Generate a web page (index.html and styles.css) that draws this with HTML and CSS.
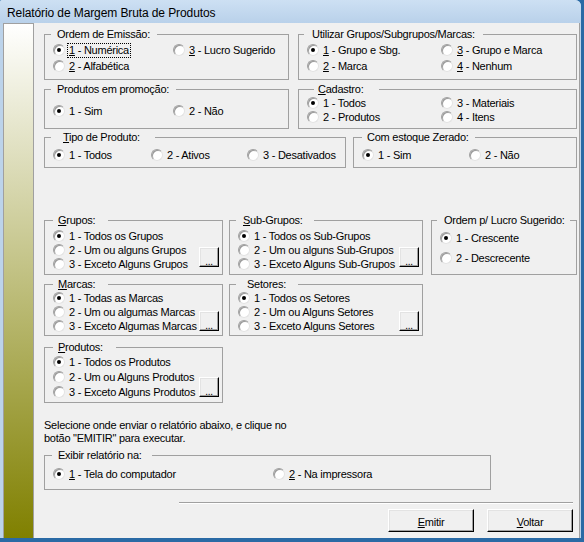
FILE: index.html
```html
<!DOCTYPE html>
<html>
<head>
<meta charset="utf-8">
<link rel="stylesheet" href="styles.css">
</head>
<body>
<div class="window">
  <div class="titlebar"><span class="title">Relatório de Margem Bruta de Produtos</span></div>
  <div class="client">
    <div class="sidebar"></div>
    <div class="main">
      <div class="row r1">
        <fieldset class="gb w-ordem">
          <legend class="lg">Ordem de Emissão:</legend>
          <div class="body g-ordem">
            <label class="rb"><i class="on"></i><span class="focus"><u>1</u> - Numérica</span></label>
            <label class="rb"><i></i><span><u>3</u> - Lucro Sugerido</span></label>
            <label class="rb"><i></i><span><u>2</u> - Alfabética</span></label>
          </div>
        </fieldset>
        <fieldset class="gb w-util">
          <legend class="lg lg-util">Utilizar Grupos/Subgrupos/Marcas:</legend>
          <div class="body g-util">
            <label class="rb"><i class="on"></i><span><u>1</u> - Grupo e Sbg.</span></label>
            <label class="rb"><i></i><span><u>3</u> - Grupo e Marca</span></label>
            <label class="rb"><i></i><span><u>2</u> - Marca</span></label>
            <label class="rb"><i></i><span><u>4</u> - Nenhum</span></label>
          </div>
        </fieldset>
      </div>

      <div class="row r2">
        <fieldset class="gb w-ordem">
          <legend class="lg">Produtos em promoção:</legend>
          <div class="body g-promo">
            <label class="rb"><i class="on"></i><span>1 - Sim</span></label>
            <label class="rb"><i></i><span>2 - Não</span></label>
          </div>
        </fieldset>
        <fieldset class="gb w-util">
          <legend class="lg lg-cad"><u>C</u>adastro:</legend>
          <div class="body g-cad">
            <label class="rb"><i class="on"></i><span>1 - Todos</span></label>
            <label class="rb"><i></i><span>3 - Materiais</span></label>
            <label class="rb"><i></i><span>2 - Produtos</span></label>
            <label class="rb"><i></i><span>4 - Itens</span></label>
          </div>
        </fieldset>
      </div>

      <div class="row r3">
        <fieldset class="gb w-tipo">
          <legend class="lg lg-tipo"><u>T</u>ipo de Produto:</legend>
          <div class="body g-tipo">
            <label class="rb"><i class="on"></i><span>1 - Todos</span></label>
            <label class="rb"><i></i><span>2 - Ativos</span></label>
            <label class="rb"><i></i><span>3 - Desativados</span></label>
          </div>
        </fieldset>
        <fieldset class="gb w-est">
          <legend class="lg lg-est">Com estoque Zerado:</legend>
          <div class="body g-est">
            <label class="rb"><i class="on"></i><span>1 - Sim</span></label>
            <label class="rb"><i></i><span>2 - Não</span></label>
          </div>
        </fieldset>
      </div>

      <div class="row r4">
        <div class="col c1">
          <fieldset class="gb">
            <legend class="lg lg-grp"><u>G</u>rupos:</legend>
            <div class="body sel sel-a">
              <div class="list l14">
                <label class="rb"><i class="on"></i><span>1 - Todos os Grupos</span></label>
                <label class="rb"><i></i><span>2 - Um ou alguns Grupos</span></label>
                <label class="rb"><i></i><span>3 - Exceto Alguns Grupos</span></label>
              </div>
              <button class="btn dots b-a">...</button>
            </div>
          </fieldset>
          <fieldset class="gb m-marcas">
            <legend class="lg lg-grp"><u>M</u>arcas:</legend>
            <div class="body sel sel-b">
              <div class="list l14">
                <label class="rb"><i class="on"></i><span>1 - Todas as Marcas</span></label>
                <label class="rb"><i></i><span>2 - Um ou algumas Marcas</span></label>
                <label class="rb"><i></i><span>3 - Exceto Algumas Marcas</span></label>
              </div>
              <button class="btn dots b-b">...</button>
            </div>
          </fieldset>
          <fieldset class="gb m-prod">
            <legend class="lg lg-grp"><u>P</u>rodutos:</legend>
            <div class="body sel sel-c">
              <div class="list l15">
                <label class="rb"><i class="on"></i><span>1 - Todos os Produtos</span></label>
                <label class="rb"><i></i><span>2 - Um ou Alguns Produtos</span></label>
                <label class="rb"><i></i><span>3 - Exceto Alguns Produtos</span></label>
              </div>
              <button class="btn dots b-b">...</button>
            </div>
          </fieldset>
        </div>
        <div class="col c2">
          <fieldset class="gb">
            <legend class="lg lg-sub"><u>S</u>ub-Grupos:</legend>
            <div class="body sel sel-a">
              <div class="list l14">
                <label class="rb"><i class="on"></i><span>1 - Todos os Sub-Grupos</span></label>
                <label class="rb"><i></i><span>2 - Um ou alguns Sub-Grupos</span></label>
                <label class="rb"><i></i><span>3 - Exceto Alguns Sub-Grupos</span></label>
              </div>
              <button class="btn dots b-a">...</button>
            </div>
          </fieldset>
          <fieldset class="gb m-marcas">
            <legend class="lg lg-set">Setores:</legend>
            <div class="body sel sel-b">
              <div class="list l14">
                <label class="rb"><i class="on"></i><span>1 - Todos os Setores</span></label>
                <label class="rb"><i></i><span>2 - Um ou Alguns Setores</span></label>
                <label class="rb"><i></i><span>3 - Exceto Alguns Setores</span></label>
              </div>
              <button class="btn dots b-b">...</button>
            </div>
          </fieldset>
        </div>
        <div class="col c3">
          <fieldset class="gb">
            <legend class="lg lg-luc">Ordem p/ Lucro Sugerido:</legend>
            <div class="body g-luc">
              <label class="rb"><i class="on"></i><span>1 - Crescente</span></label>
              <label class="rb"><i></i><span>2 - Descrecente</span></label>
            </div>
          </fieldset>
        </div>
      </div>

      <p class="hint">Selecione onde enviar o relatório abaixo, e clique no<br>botão "EMITIR" para executar.</p>

      <fieldset class="gb w-exi">
        <legend class="lg lg-exi">Exibir relatório na:</legend>
        <div class="body g-exi">
          <label class="rb"><i class="on"></i><span><u>1</u> - Tela do computador</span></label>
          <label class="rb"><i></i><span><u>2</u> - Na impressora</span></label>
        </div>
      </fieldset>

      <div class="sep"></div>
      <div class="actions">
        <button class="btn big"><u>E</u>mitir</button>
        <button class="btn big"><u>V</u>oltar</button>
      </div>
    </div>
  </div>
</div>
</body>
</html>
```

FILE: styles.css
```css
html, body {
  margin: 0;
  padding: 0;
}
body {
  width: 584px;
  height: 542px;
  overflow: hidden;
  background: #2a6aa5;
  font-family: "Liberation Sans", Arial, sans-serif;
  font-size: 11px;
  letter-spacing: -0.25px;
  color: #000;
}
.window {
  width: 581px;
  height: 538px;
  display: flex;
  flex-direction: column;
  background: #bcd3ea;
  border-top-right-radius: 6px;
  border-top-left-radius: 2px;
  overflow: hidden;
}
.titlebar {
  height: 23px;
  flex: none;
  background: linear-gradient(#cde0f3, #b9d1ea);
  display: flex;
  align-items: center;
}
.title {
  margin-left: 7px;
  font-size: 12px;
  letter-spacing: -0.1px;
  padding-top: 3px;
}
.client {
  flex: 1;
  display: flex;
  margin-left: 3px;
  margin-right: 1px;
  background: #f0f0f0;
  border-right: 1px solid #a0a0a0;
}
.sidebar {
  width: 29px;
  flex: none;
  border: 1px solid #a0a0a0;
  border-bottom: none;
  background: linear-gradient(#ffffff, #808000);
}
.main {
  flex: 1;
  display: flex;
  flex-direction: column;
  align-items: flex-start;
  padding-left: 10px;
}
.row {
  display: flex;
  align-items: flex-start;
}
.r1 { margin-top: 5px; gap: 9px; }
.r2 { margin-top: 3px; gap: 9px; }
.r3 { margin-top: 2px; gap: 7px; }
.r4 { margin-top: 46px; gap: 6px; }

.gb {
  margin: 0;
  padding: 0;
  border: 1px solid #a0a0a0;
  min-width: 0;
  box-sizing: border-box;
}
.lg {
  margin-left: 6px;
  padding: 0 7px 0 6px;
  line-height: 13px;
  height: 13px;
  white-space: nowrap;
}
.lg-util { margin-left: 5px; padding: 0 8px 0 8px; }
.lg-cad { margin-left: 15px; padding: 0 16px 0 4px; }
.lg-tipo { padding: 0 15px 0 12px; }
.lg-est { margin-left: 8px; padding: 0 6px 0 5px; }
.lg-grp { margin-left: 8px; padding: 0 13px 0 5px; }
.lg-sub { margin-left: 6px; padding: 0 11px 0 7px; }
.lg-set { margin-left: 6px; padding: 0 12px 0 11px; }
.lg-luc { margin-left: 5px; padding: 0 5px 0 7px; }
.lg-exi { margin-left: 7px; padding: 0 10px 0 6px; }

.body {
  padding-left: 8px;
}

.w-ordem { width: 245px; }
.w-util { width: 279px; }
.w-tipo { width: 302px; }
.w-est { width: 224px; }
.w-exi { width: 447px; margin-top: 4px; }

.g-ordem {
  display: grid;
  grid-template-columns: 120px 1fr;
  grid-auto-rows: 16px;
  padding-top: 1px;
  padding-bottom: 5px;
}
.g-util {
  display: grid;
  grid-template-columns: 134px 1fr;
  grid-auto-rows: 16px;
  padding-top: 1px;
  padding-bottom: 5px;
}
.g-promo {
  display: grid;
  grid-template-columns: 120px 1fr;
  grid-auto-rows: 16px;
  padding-top: 7px;
  padding-bottom: 9px;
}
.g-cad {
  display: grid;
  grid-template-columns: 134px 1fr;
  grid-auto-rows: 14px;
  padding-top: 0;
  padding-bottom: 4px;
}
.g-tipo {
  display: grid;
  grid-template-columns: 98px 96px 1fr;
  grid-auto-rows: 16px;
  padding-top: 3px;
  padding-bottom: 4px;
}
.g-est {
  display: grid;
  grid-template-columns: 107px 1fr;
  grid-auto-rows: 16px;
  padding-top: 3px;
  padding-bottom: 4px;
}
.g-exi {
  display: grid;
  grid-template-columns: 220px 1fr;
  grid-auto-rows: 16px;
  padding-top: 4px;
  padding-bottom: 7px;
}
.g-luc {
  display: grid;
  grid-auto-rows: 20px;
  padding-top: 1px;
  padding-bottom: 6px;
}

.col {
  display: flex;
  flex-direction: column;
}
.c1 { width: 179px; }
.c2 { width: 194px; margin-right: 2px; }
.c3 { width: 146px; }
.col .gb { width: 100%; }
.m-marcas { margin-top: 3px; }
.m-prod { margin-top: 5px; }

.sel {
  display: flex;
  align-items: flex-end;
  padding-right: 3px;
}
.sel-a { padding-top: 2px; padding-bottom: 3px; }
.sel-b { padding-top: 0; padding-bottom: 2px; }
.sel-c { padding-top: 0; padding-bottom: 3px; }
.list {
  flex: 1;
  min-width: 0;
  display: grid;
}
.l14 { grid-auto-rows: 14px; }
.l15 { grid-auto-rows: 15px; }

.rb {
  display: flex;
  align-items: center;
  white-space: nowrap;
}
.rb i {
  position: relative;
  flex: none;
  width: 12px;
  height: 12px;
  box-sizing: border-box;
  border-radius: 50%;
  background: #fff;
  border: 1px solid;
  border-color: #a0a0a0 #e3e3e3 #e3e3e3 #a0a0a0;
  box-shadow: inset 1px 1px 0 #9a9a9a;
  margin-right: 4px;
}
.rb i.on::after {
  content: "";
  position: absolute;
  left: 3px;
  top: 3px;
  width: 4px;
  height: 4px;
  border-radius: 50%;
  background: #000;
}
.focus {
  outline: 1px dotted #000;
  padding: 0 1px;
  line-height: 13px;
  margin-left: -1px;
}
u {
  text-decoration: underline;
  text-underline-offset: 1px;
}

.btn {
  box-sizing: border-box;
  margin: 0;
  padding: 0;
  background: #f0f0f0;
  border: 1px solid;
  border-color: #fff #000 #000 #fff;
  box-shadow: inset -1px -1px 0 #a0a0a0, inset 1px 1px 0 #e3e3e3;
  font-family: "Liberation Sans", Arial, sans-serif;
  font-size: 11px;
  letter-spacing: -0.25px;
  color: #000;
}
.dots {
  flex: none;
  width: 20px;
  height: 20px;
  line-height: 20px;
  padding-top: 4px;
  font-size: 10px;
}
.b-a { margin-bottom: 4px; }
.b-b { margin-bottom: 2px; }

.hint {
  margin: 16px 0 0 0;
  line-height: 13px;
  white-space: nowrap;
}

.sep {
  align-self: flex-end;
  width: 394px;
  margin-right: 6px;
  margin-top: 12px;
  border-top: 1px solid #a0a0a0;
  border-bottom: 1px solid #fff;
}
.actions {
  align-self: flex-end;
  margin-right: 6px;
  margin-top: 5px;
  display: flex;
  gap: 13px;
}
.big {
  width: 86px;
  height: 23px;
  padding-top: 2px;
}
```
